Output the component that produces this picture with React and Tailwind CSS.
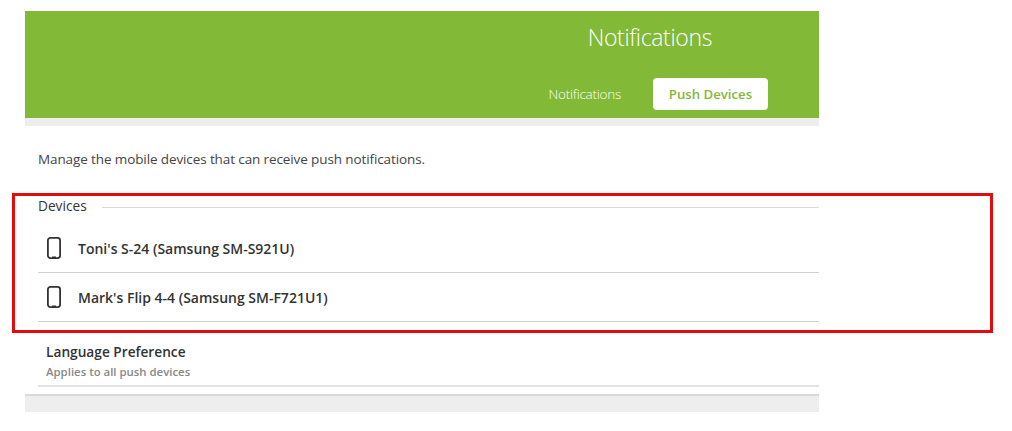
import React from 'react';

const devices = ["Toni's S-24 (Samsung SM-S921U)", "Mark's Flip 4-4 (Samsung SM-F721U1)"];

const PhoneIcon = () => (
  <svg width="16" height="24" viewBox="0 0 16 24" fill="none" className="shrink-0 text-[#333]">
    <rect x="1.9" y="1.9" width="12.2" height="20.2" rx="2.5" stroke="currentColor" strokeWidth="1.8" />
    <rect x="6" y="20.5" width="4" height="2.2" fill="currentColor" />
  </svg>
);

export default function App() {
  return (
    <div className="relative h-[431px] w-[1012px] overflow-hidden bg-white pt-[11px] pl-[25px] font-['Open_Sans',sans-serif] text-[#333]">
      <div className="w-[794px]">
        <header className="flex h-[107px] flex-col items-end bg-[#82b936] text-white">
          <h1 className="mt-[10px] mr-[107px] text-[23px] leading-[32px] font-light tracking-[-0.35px]">Notifications</h1>
          <nav className="mt-[25px] mr-[51px] flex items-center gap-[32px]">
            <span className="text-[13.5px] font-light tracking-[-0.25px]">Notifications</span>
            <span className="flex h-[32px] w-[115px] items-center justify-center rounded-[4px] bg-white pt-[2px] text-[13.2px] font-semibold text-[#82b936]">
              Push Devices
            </span>
          </nav>
        </header>
        <div className="h-[8px] bg-[#eeeeee]" />

        <p className="mt-[23px] ml-[13px] text-[13.5px] leading-[20px] tracking-[-0.11px] text-[#444]">
          Manage the mobile devices that can receive push notifications.
        </p>

        <section className="mt-[28px] ml-[13px]">
          <div className="flex h-[18px] items-center gap-[15px]">
            <h2 className="text-[13.7px] text-[#333]">Devices</h2>
            <div className="mt-[2px] h-px flex-1 bg-[#d8d8d8]" />
          </div>
          <div className="mt-[9px]">
            {devices.map((name) => (
              <div key={name} className="flex h-[49px] items-center gap-[16px] border-b border-[#d0d0d0] pl-[8px]">
                <PhoneIcon />
                <span className="text-[14px] font-semibold">{name}</span>
              </div>
            ))}
          </div>
        </section>

        <section className="mt-[21px] ml-[13px] h-[44px] border-b-2 border-[#e2e2e2] pl-[8px]">
          <h3 className="text-[13.7px] leading-[18px] font-semibold">Language Preference</h3>
          <p className="mt-[3px] text-[11.4px] leading-[16px] font-semibold text-[#888]">Applies to all push devices</p>
        </section>

        <div className="mt-[7px] h-[18px] border-t-2 border-[#d9d9d9] bg-[#eeeeee]" />
      </div>

      <div className="absolute top-[193px] left-[12px] h-[140px] w-[981px] border-[3px] border-[#e30b0b]" />
    </div>
  );
}
